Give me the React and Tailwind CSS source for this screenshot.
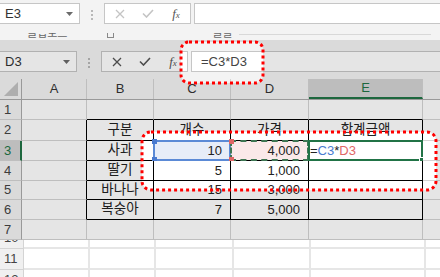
import React from 'react';

const COLS = [65, 67, 77, 78, 114, 39];
const ROW_H = [20, 21, 20, 20, 19, 20, 20];
const LETTERS = ['A', 'B', 'C', 'D', 'E', ''];

const DATA = {
  2: ['', '구분', '개수', '가격', '합계금액'],
  3: ['', '사과', '10', '4,000', ''],
  4: ['', '딸기', '5', '1,000', ''],
  5: ['', '바나나', '15', '3,000', ''],
  6: ['', '복숭아', '7', '5,000', ''],
};

// rounded rect path for the dim cut-outs
function rr(x, y, w, h, r) {
  return `M${x + r} ${y}H${x + w - r}A${r} ${r} 0 0 1 ${x + w} ${y + r}V${y + h - r}A${r} ${r} 0 0 1 ${x + w - r} ${y + h}H${x + r}A${r} ${r} 0 0 1 ${x} ${y + h - r}V${y + r}A${r} ${r} 0 0 1 ${x + r} ${y}Z`;
}

function Arrow() {
  return (
    <svg width="7" height="4" viewBox="0 0 7 4">
      <path d="M0 0h7L3.5 4z" fill="#6b6b6b" />
    </svg>
  );
}

function Dots() {
  return (
    <div className="flex flex-col gap-[2px] mt-[7px]">
      <span className="w-[2px] h-[2px] bg-[#b8b8b8]" />
      <span className="w-[2px] h-[2px] bg-[#b8b8b8]" />
      <span className="w-[2px] h-[2px] bg-[#b8b8b8]" />
    </div>
  );
}

function FormulaBar({ name, pad, nameW, btnColor, fxColor, formula, textPad }) {
  return (
    <div className={`flex items-start bg-[#f3f3f3] ${pad}`}>
      <div className={`${nameW} h-[21px] ml-[-1px] bg-white border border-[#c6c6c6] flex items-center justify-between pl-[5px] pr-[6px] text-[13px] text-[#333]`}>
        <span>{name}</span>
        <Arrow />
      </div>
      <div className="w-[24px] flex justify-center">
        <Dots />
      </div>
      <div className="w-[87px] h-[21px] bg-white border border-[#c6c6c6] flex items-center pl-[1px]">
        <div className="w-[28px] flex justify-center">
          <svg width="10" height="10" viewBox="0 0 10 10">
            <path d="M1 1l8 8M9 1l-8 8" stroke={btnColor} strokeWidth="1.3" />
          </svg>
        </div>
        <div className="w-[28px] flex justify-center">
          <svg width="12" height="9" viewBox="0 0 12 9">
            <path d="M1 4.5l3.5 3.5L11 1" stroke={btnColor} strokeWidth="1.6" fill="none" />
          </svg>
        </div>
        <div className="w-[28px] flex justify-center">
          <span className={`font-['Liberation_Serif',serif] italic text-[13px] leading-none ${fxColor}`}>
            f<span className="text-[9px]">x</span>
          </span>
        </div>
      </div>
      <div className={`flex-1 h-[21px] ml-[3px] mr-[-2px] bg-white border border-[#c6c6c6] flex items-center ${textPad} text-[13px] text-[#444]`}>
        {formula}
      </div>
    </div>
  );
}

function Cell({ r, c }) {
  const inTable = r >= 2 && r <= 6 && c >= 1 && c <= 4;
  const rightBlack = inTable || (c === 0 && r >= 2 && r <= 6);
  const bottomBlack = inTable || (r === 1 && c >= 1 && c <= 4);
  const text = DATA[r] ? DATA[r][c] || '' : '';
  const korean = r === 2 || c === 1;
  const align = korean ? 'justify-center' : c === 2 || c === 3 ? 'justify-end pr-[8px]' : 'justify-start';

  let bg = 'bg-white';
  if (r === 3 && c === 2) bg = 'bg-[#e7edf8]';
  if (r === 3 && c === 3) bg = 'bg-[#fae9e9]';

  return (
    <div
      style={{ width: COLS[c] }}
      className={`relative shrink-0 flex items-center border-r border-b ${rightBlack ? 'border-r-black' : 'border-r-[#d4d4d4]'} ${bottomBlack ? 'border-b-black' : 'border-b-[#d4d4d4]'} ${bg} ${align}`}
    >
      {text && <span className={`whitespace-nowrap ${korean ? 'text-[13.5px]' : ''}`}>{text}</span>}
      {r === 3 && c === 4 && (
        <span className="pl-[1px] whitespace-nowrap">
          =<span className="text-[#4a7bd0]">C3</span>*<span className="text-[#e06666]">D3</span>
        </span>
      )}
      {r === 3 && c === 2 && (
        <div className="absolute top-[-1px] left-[-1px] right-[-1px] bottom-[-1px] border-2 border-[#5b8ad6]">
          <span className="absolute top-[-3px] left-[-3px] w-[5px] h-[5px] bg-[#4a7bd0]" />
          <span className="absolute bottom-[-3px] left-[-3px] w-[5px] h-[5px] bg-[#4a7bd0]" />
        </div>
      )}
      {r === 3 && c === 3 && (
        <div className="absolute top-[-1px] left-[-1px] right-[-1px] bottom-[-1px] border-2 border-dashed border-[#3e7653]">
          <span className="absolute top-[-3px] left-[-3px] w-[5px] h-[5px] bg-[#e06666]" />
          <span className="absolute bottom-[-3px] left-[-3px] w-[5px] h-[5px] bg-[#e06666]" />
        </div>
      )}
      {r === 3 && c === 4 && (
        <div className="absolute top-[-1px] left-[-1px] right-[-1px] bottom-[-1px] border-2 border-[#217346]">
          <span className="absolute bottom-[-4px] right-[-4px] w-[6px] h-[6px] bg-[#217346] border border-white" />
        </div>
      )}
    </div>
  );
}

function Sheet() {
  const dim = `M0 0H440V200H0Z ${rr(181, 2, 82, 41, 8)} ${rr(142, 92, 294, 58, 9)}`;
  return (
    <div className="relative h-[200px] overflow-hidden">
      <FormulaBar
        name="D3"
        pad="h-[39px] pt-[11px]"
        nameW="w-[78px]"
        btnColor="#555"
        fxColor="text-[#555]"
        formula="=C3*D3"
        textPad="pl-[9px]"
      />

      {/* column headers */}
      <div className="flex h-[21px] bg-[#f3f3f3] border-b border-[#ababab]">
        <div className="w-[22px] shrink-0 border-r border-[#ababab] flex items-end justify-end pr-[3px] pb-[3px]">
          <svg width="14" height="14" viewBox="0 0 14 14">
            <path d="M14 0V14H0z" fill="#c2c2c2" />
          </svg>
        </div>
        {LETTERS.map((l, i) => (
          <div
            key={i}
            style={{ width: COLS[i] }}
            className={`shrink-0 flex items-center justify-center border-r border-[#d4d4d4] ${i === 4 ? 'bg-[#d3d3d3] text-[#217346] border-b-2 border-b-[#217346]' : 'text-[#333]'}`}
          >
            {l}
          </div>
        ))}
      </div>

      {/* rows */}
      {ROW_H.map((h, idx) => {
        const r = idx + 1;
        return (
          <div key={r} className="flex" style={{ height: h }}>
            <div
              className={`w-[22px] shrink-0 flex items-center pl-[4px] border-b border-b-[#d4d4d4] ${r === 3 ? 'bg-[#d3d3d3] border-r-2 border-r-[#217346] text-[#217346]' : 'bg-[#f3f3f3] border-r border-r-[#ababab] text-[#444]'}`}
            >
              {r}
            </div>
            {COLS.map((_, c) => (
              <Cell key={c} r={r} c={c} />
            ))}
          </div>
        );
      })}

      {/* dim layer with highlighted areas */}
      <svg className="absolute top-0 left-0 pointer-events-none" width="440" height="200" viewBox="0 0 440 200">
        <path d={dim} fill="rgba(0,0,0,0.1)" fillRule="evenodd" />
        <rect x="181" y="2" width="82" height="41" rx="8" fill="none" stroke="#ff0000" strokeWidth="3" strokeDasharray="3 3" />
        <rect x="142" y="92" width="294" height="58" rx="9" fill="none" stroke="#ff0000" strokeWidth="3" strokeDasharray="3 3" />
      </svg>
    </div>
  );
}

function BottomRows() {
  const cols = [66, 66, 78, 77, 115, 38];
  return (
    <div className="h-[37px] overflow-hidden bg-white">
      <div className="mt-[-12px]">
        {[10, 11, 12].map((n) => (
          <div key={n} className="flex h-[21px]">
            <div className="w-[24px] shrink-0 bg-[#f0f0f0] border-r border-b border-[#d4d4d4] flex items-center pl-[4px] text-[#444]">
              {n}
            </div>
            {cols.map((w, i) => (
              <div key={i} style={{ width: w }} className="shrink-0 border-r-2 border-b-2 border-[#e6e6e6]" />
            ))}
          </div>
        ))}
      </div>
    </div>
  );
}

export default function App() {
  return (
    <div className="w-[440px] h-[277px] overflow-hidden bg-white font-['Liberation_Sans','Noto_Sans_CJK_KR',sans-serif] text-[13px] text-[#222]">
      <FormulaBar
        name="E3"
        pad="h-[33px] pt-[3px]"
        nameW="w-[81px]"
        btnColor="#c4c4c4"
        fxColor="text-[#555]"
        formula=""
        textPad="pl-[8px]"
      />
      {/* ribbon group labels, cut off */}
      <div className="relative h-[7px] overflow-hidden bg-[#f3f3f3] flex items-start text-[11px] text-[#666]">
        <span className="ml-[27px] mt-[-8px] whitespace-nowrap">클립보드</span>
        <span className="ml-[40px] mt-[-2px] w-[7px] h-[7px] border border-[#888]" />
        <span className="ml-[98px] mt-[-8px] whitespace-nowrap">글꼴</span>
        <span className="ml-[6px] mt-[1px] w-[192px] h-[1px] bg-[#d8d8d8]" />
      </div>
      <Sheet />
      <BottomRows />
    </div>
  );
}
